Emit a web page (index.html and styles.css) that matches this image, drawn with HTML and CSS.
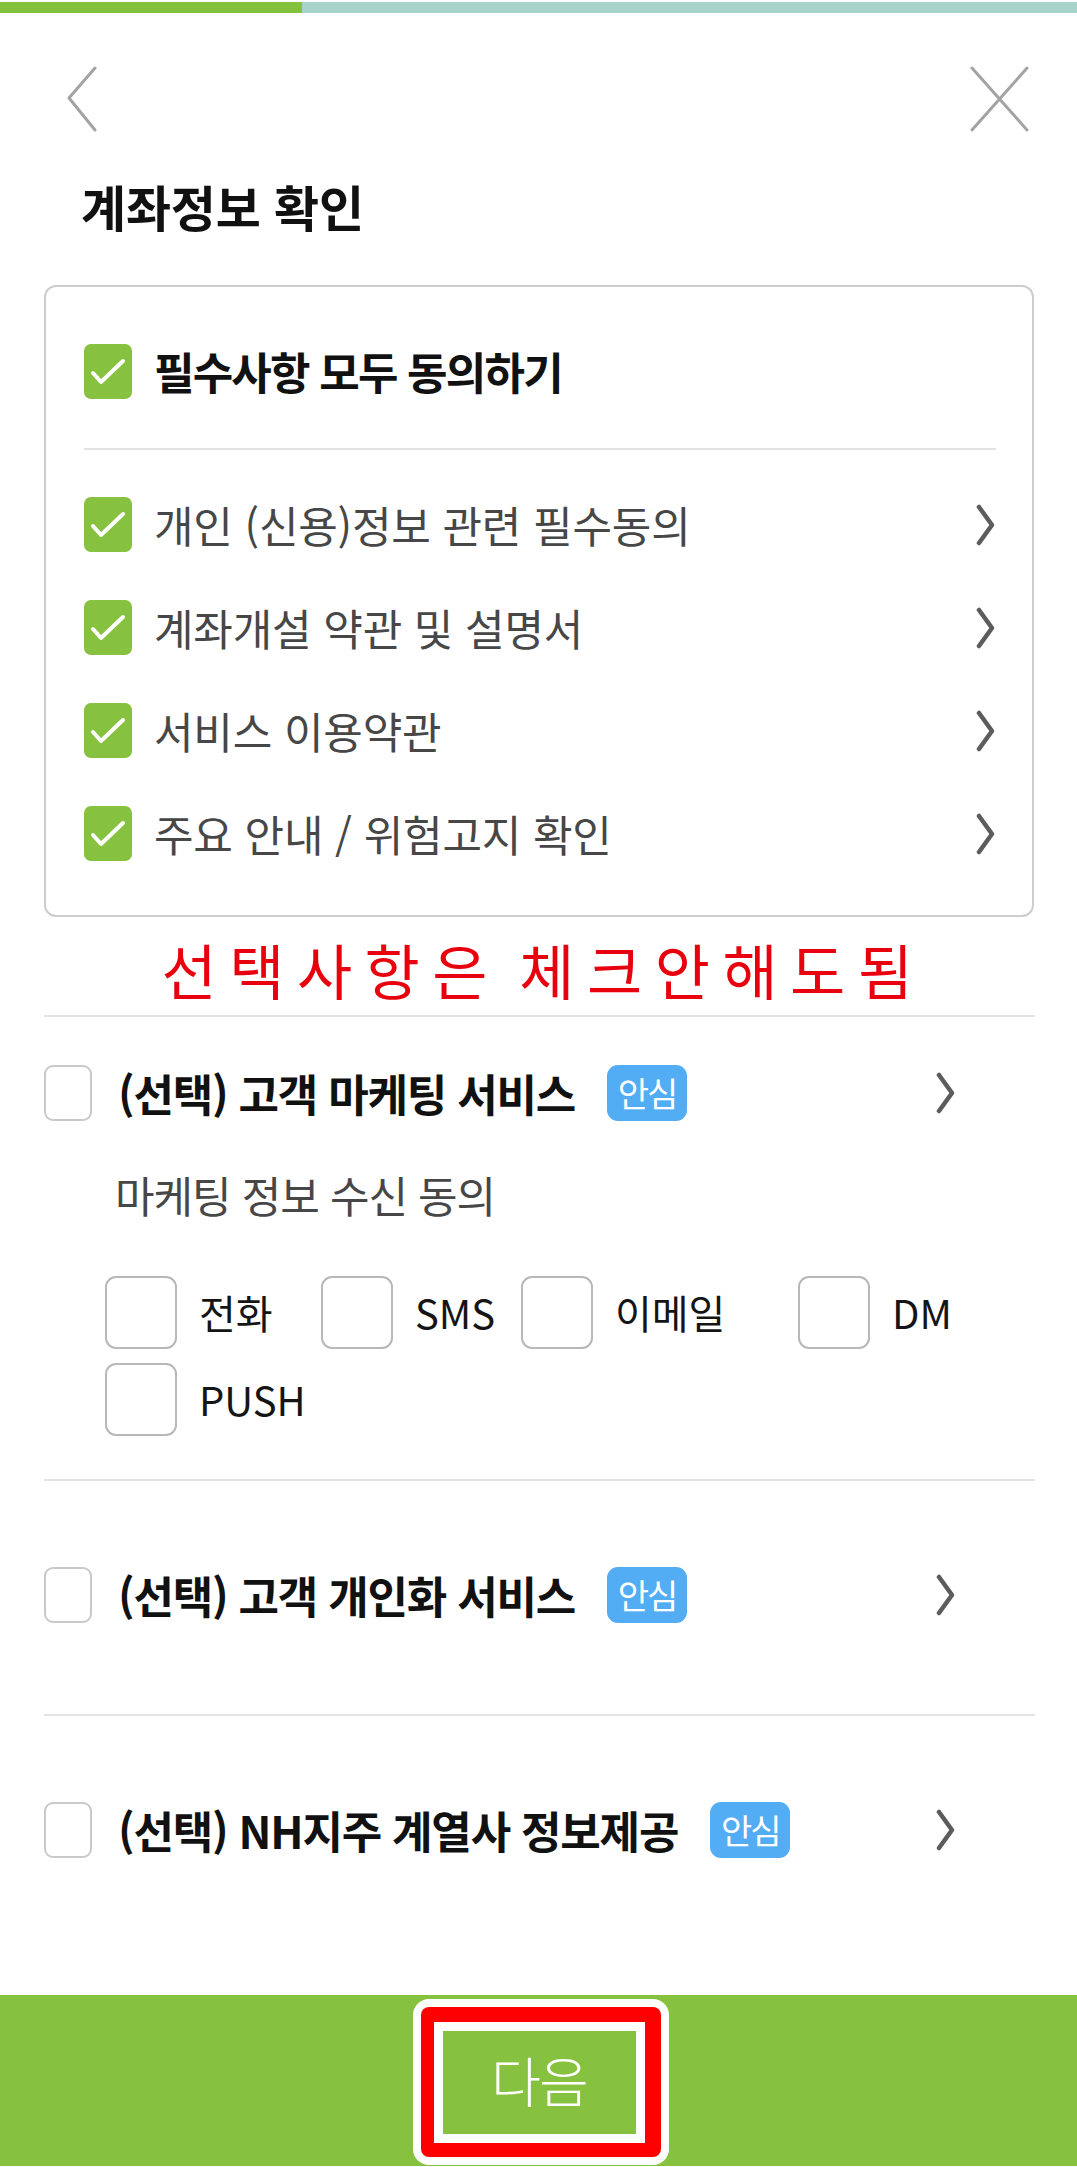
FILE: index.html
```html
<!DOCTYPE html>
<html lang="ko">
<head>
<meta charset="utf-8">
<title>계좌정보 확인</title>
<link rel="stylesheet" href="styles.css">
</head>
<body>
<div class="page">
  <div class="progress"><div class="progress-fill"></div></div>

  <header class="header">
    <svg class="icon-back" width="30" height="66" viewBox="0 0 30 66"><path d="M28 2 L2 32 L28 64" fill="none" stroke="#a3a3a3" stroke-width="3" stroke-linecap="round" stroke-linejoin="round"/></svg>
    <svg class="icon-close" width="60" height="66" viewBox="0 0 60 66"><path d="M3 2 L58 64 M58 2 L3 64" fill="none" stroke="#a3a3a3" stroke-width="3" stroke-linecap="round"/></svg>
  </header>

  <h1 class="title">계좌정보 확인</h1>

  <section class="req-box">
    <div class="all-row">
      <span class="check on"><svg width="48" height="55" viewBox="0 0 48 55"><path d="M9 29 L17 38 L39 17" fill="none" stroke="#fff" stroke-width="4" stroke-linecap="round" stroke-linejoin="round"/></svg></span>
      <span class="all-label">필수사항 모두 동의하기</span>
    </div>
    <div class="inner-divider"></div>
    <ul class="req-list">
      <li class="req-row">
        <span class="check on"><svg width="48" height="55" viewBox="0 0 48 55"><path d="M9 29 L17 38 L39 17" fill="none" stroke="#fff" stroke-width="4" stroke-linecap="round" stroke-linejoin="round"/></svg></span>
        <span class="req-label">개인 (신용)정보 관련 필수동의</span>
        <svg class="chev" width="20" height="42" viewBox="0 0 20 42"><path d="M3 3 L16 21 L3 39" fill="none" stroke="#5c5c5c" stroke-width="4.5" stroke-linecap="round" stroke-linejoin="round"/></svg>
      </li>
      <li class="req-row">
        <span class="check on"><svg width="48" height="55" viewBox="0 0 48 55"><path d="M9 29 L17 38 L39 17" fill="none" stroke="#fff" stroke-width="4" stroke-linecap="round" stroke-linejoin="round"/></svg></span>
        <span class="req-label">계좌개설 약관 및 설명서</span>
        <svg class="chev" width="20" height="42" viewBox="0 0 20 42"><path d="M3 3 L16 21 L3 39" fill="none" stroke="#5c5c5c" stroke-width="4.5" stroke-linecap="round" stroke-linejoin="round"/></svg>
      </li>
      <li class="req-row">
        <span class="check on"><svg width="48" height="55" viewBox="0 0 48 55"><path d="M9 29 L17 38 L39 17" fill="none" stroke="#fff" stroke-width="4" stroke-linecap="round" stroke-linejoin="round"/></svg></span>
        <span class="req-label">서비스 이용약관</span>
        <svg class="chev" width="20" height="42" viewBox="0 0 20 42"><path d="M3 3 L16 21 L3 39" fill="none" stroke="#5c5c5c" stroke-width="4.5" stroke-linecap="round" stroke-linejoin="round"/></svg>
      </li>
      <li class="req-row">
        <span class="check on"><svg width="48" height="55" viewBox="0 0 48 55"><path d="M9 29 L17 38 L39 17" fill="none" stroke="#fff" stroke-width="4" stroke-linecap="round" stroke-linejoin="round"/></svg></span>
        <span class="req-label">주요 안내 / 위험고지 확인</span>
        <svg class="chev" width="20" height="42" viewBox="0 0 20 42"><path d="M3 3 L16 21 L3 39" fill="none" stroke="#5c5c5c" stroke-width="4.5" stroke-linecap="round" stroke-linejoin="round"/></svg>
      </li>
    </ul>
  </section>

  <p class="note">선택사항은 체크안해도됨</p>

  <section class="opt-section">
    <div class="opt-divider first"></div>
    <div class="opt-row first">
      <span class="check off"></span>
      <span class="opt-label">(선택) 고객 마케팅 서비스</span>
      <span class="badge">안심</span>
      <svg class="chev opt-chev" width="20" height="42" viewBox="0 0 20 42"><path d="M3 3 L16 21 L3 39" fill="none" stroke="#5c5c5c" stroke-width="4.5" stroke-linecap="round" stroke-linejoin="round"/></svg>
    </div>
    <p class="sub-label">마케팅 정보 수신 동의</p>
    <div class="channel-grid">
      <label class="channel"><span class="channel-box"></span><span class="channel-label">전화</span></label>
      <label class="channel"><span class="channel-box"></span><span class="channel-label">SMS</span></label>
      <label class="channel"><span class="channel-box"></span><span class="channel-label">이메일</span></label>
      <label class="channel"><span class="channel-box"></span><span class="channel-label">DM</span></label>
      <label class="channel"><span class="channel-box"></span><span class="channel-label">PUSH</span></label>
    </div>
    <div class="opt-divider after-grid"></div>
    <div class="opt-row second">
      <span class="check off"></span>
      <span class="opt-label">(선택) 고객 개인화 서비스</span>
      <span class="badge">안심</span>
      <svg class="chev opt-chev" width="20" height="42" viewBox="0 0 20 42"><path d="M3 3 L16 21 L3 39" fill="none" stroke="#5c5c5c" stroke-width="4.5" stroke-linecap="round" stroke-linejoin="round"/></svg>
    </div>
    <div class="opt-divider after-second"></div>
    <div class="opt-row third">
      <span class="check off"></span>
      <span class="opt-label">(선택) NH지주 계열사 정보제공</span>
      <span class="badge">안심</span>
      <svg class="chev opt-chev" width="20" height="42" viewBox="0 0 20 42"><path d="M3 3 L16 21 L3 39" fill="none" stroke="#5c5c5c" stroke-width="4.5" stroke-linecap="round" stroke-linejoin="round"/></svg>
    </div>
  </section>

  <footer class="footer">
    <div class="next-outer">
      <div class="next-red">
        <button class="next-btn" type="button">다음</button>
      </div>
    </div>
  </footer>
</div>
</body>
</html>
```

FILE: styles.css
```css
* { box-sizing: border-box; }

html, body {
  margin: 0;
  padding: 0;
  background: #fff;
}

body {
  font-family: "Noto Sans CJK KR", "Noto Sans", sans-serif;
  color: #111;
}

.page {
  width: 1077px;
  height: 2167px;
  overflow: hidden;
}

.progress {
  margin-top: 2px;
  height: 11px;
  background: #a8d3cb;
}

.progress-fill {
  width: 302px;
  height: 100%;
  background: #84c13d;
}

.header {
  margin-top: 53px;
  height: 66px;
  padding: 0 48px 0 67px;
  display: flex;
  justify-content: space-between;
  align-items: flex-start;
}

.header svg { display: block; }

.title {
  margin: 46px 0 0 81px;
  height: 56px;
  font-size: 49px;
  line-height: 56px;
  font-weight: 700;
  letter-spacing: -0.2px;
  color: #111;
}

.req-box {
  margin: 51px 43px 0 44px;
  border: 2px solid #cdcdcd;
  border-radius: 12px;
  padding: 57px 36px 54px 38px;
}

.all-row {
  display: flex;
  align-items: center;
  gap: 22px;
  height: 55px;
}

.check {
  flex: none;
  display: block;
  width: 48px;
  height: 55px;
  border-radius: 7px;
}

.check svg { display: block; }

.check.on { background: #86c13f; }

.check.off {
  height: 56px;
  border: 2px solid #c9c9c9;
  border-radius: 9px;
  background: #fff;
}

.all-label {
  font-size: 44px;
  line-height: 55px;
  font-weight: 700;
  letter-spacing: -1.8px;
  color: #111;
}

.inner-divider {
  height: 2px;
  background: #e2e2e2;
  margin: 49px 0 47px;
}

.req-list {
  list-style: none;
  margin: 0;
  padding: 0;
  display: flex;
  flex-direction: column;
  gap: 48px;
}

.req-row {
  display: flex;
  align-items: center;
  gap: 22px;
  height: 55px;
}

.req-label {
  flex: 1;
  font-size: 43px;
  line-height: 55px;
  font-weight: 400;
  letter-spacing: -0.2px;
  color: #474747;
}

.chev {
  flex: none;
  display: block;
}

.note {
  margin: 17px 0 0;
  height: 70px;
  text-align: center;
  font-size: 60px;
  line-height: 70px;
  font-weight: 400;
  letter-spacing: 12.5px;
  word-spacing: -10px;
  color: #e8000e;
  padding-left: 10px;
}

.opt-section {
  padding: 0 42px 0 44px;
}

.opt-divider {
  height: 2px;
  background: #e3e3e3;
}

.opt-divider.first { margin-top: 11px; }
.opt-divider.after-grid { margin-top: 43px; }
.opt-divider.after-second { margin-top: 91px; }

.opt-row {
  display: flex;
  align-items: center;
  height: 56px;
}

.opt-row.first { margin-top: 48px; }
.opt-row.second { margin-top: 86px; }
.opt-row.third { margin-top: 86px; }

.opt-label {
  margin-left: 26px;
  font-size: 44px;
  line-height: 56px;
  font-weight: 700;
  letter-spacing: -1.2px;
  color: #111;
  white-space: nowrap;
}

.badge {
  flex: none;
  margin-left: 32px;
  width: 80px;
  height: 56px;
  border-radius: 11px;
  background: #52adf4;
  color: #fff;
  font-size: 34px;
  line-height: 56px;
  text-align: center;
  letter-spacing: -2px;
}

.opt-chev {
  margin-left: auto;
  margin-right: 79px;
}

.sub-label {
  margin: 43px 0 0 71px;
  height: 60px;
  font-size: 43px;
  line-height: 60px;
  font-weight: 400;
  letter-spacing: -1px;
  color: #474747;
}

.channel-grid {
  margin: 52px 0 0 61px;
  display: grid;
  grid-template-columns: 216px 200px 277px auto;
  row-gap: 14px;
}

.channel {
  display: flex;
  align-items: center;
  gap: 22px;
  height: 73px;
}

.channel-box {
  flex: none;
  width: 72px;
  height: 73px;
  border: 2px solid #b8b8b8;
  border-radius: 11px;
  background: #fff;
}

.channel-label {
  font-size: 40px;
  line-height: 73px;
  font-weight: 400;
  letter-spacing: 0;
  color: #151515;
}

.footer {
  margin-top: 137px;
  height: 171px;
  background: #86c13f;
  display: flex;
  justify-content: center;
  padding: 4px 0 0 4px;
}

.next-outer {
  width: 256px;
  height: 166px;
  background: #fff;
  border-radius: 16px;
  padding: 8px;
}

.next-red {
  height: 150px;
  background: #ff0000;
  border-radius: 8px;
  padding: 15px 16px 14px 13px;
}

.next-btn {
  display: flex;
  align-items: center;
  justify-content: center;
  width: 100%;
  height: 100%;
  margin: 0;
  padding: 0 0 6px;
  border: 9px solid #fff;
  background: #86c13f;
  color: #fff;
  font-family: "Noto Sans CJK KR", "Noto Sans", sans-serif;
  font-size: 54px;
  font-weight: 300;
  letter-spacing: -2px;
}
```
